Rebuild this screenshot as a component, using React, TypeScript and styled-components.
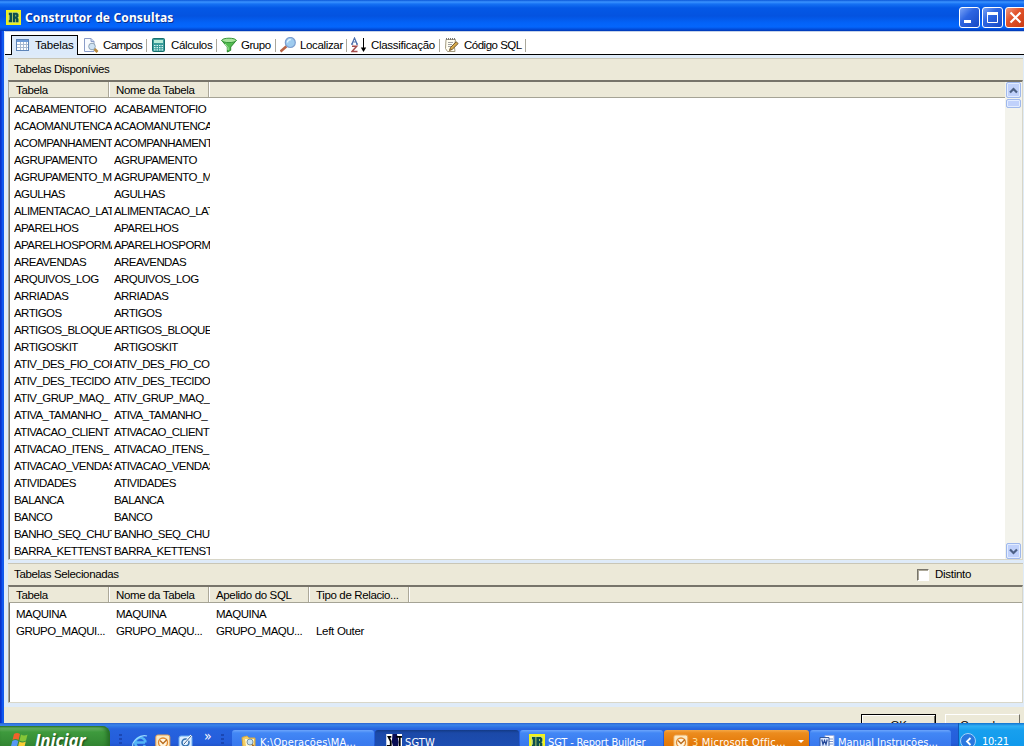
import { ReactNode } from 'react'
import styled, { createGlobalStyle, css } from 'styled-components'

const GlobalStyle = createGlobalStyle`
    * {
        box-sizing: border-box;
    }

    body {
        margin: 0;
        overflow: hidden;
        font: 11.5px/17px 'Liberation Sans', Arial, sans-serif;
        letter-spacing: -0.36px;
        color: #000;
    }

    svg {
        display: block;
        flex-shrink: 0;
    }
`

const Screen = styled.div`
    width: 1024px;
    height: 746px;
    display: flex;
    flex-direction: column;
    overflow: hidden;
    background: #ece9d8;
`

const TitleBar = styled.header`
    height: 31px;
    flex-shrink: 0;
    display: flex;
    align-items: center;
    padding: 4px 0 1px 6px;
    background: linear-gradient(
        #0a56d8 0,
        #3b93ff 2px,
        #1671f3 4px,
        #0458e6 8px,
        #0453e0 16px,
        #0363f8 23px,
        #0466fc 27px,
        #0144cd 30px,
        #0138b0 31px
    );
`

const WindowTitle = styled.h1`
    flex: 1;
    margin: 1px 0 0 4px;
    font: bold 12px/20px 'Noto Sans', 'Open Sans', sans-serif;
    letter-spacing: 0.14px;
    color: #fff;
    text-shadow: 1px 1px #0a2f8c;
`

const WindowButtons = styled.div`
    display: flex;
    gap: 2px;
    margin-right: -2px;
`

const WindowButton = styled.button<{ $close?: boolean }>`
    width: 21px;
    height: 21px;
    padding: 0;
    border: 1px solid #fff;
    border-radius: 3px;
    background: ${({ $close }) =>
        $close
            ? 'linear-gradient(135deg, #ee9a82, #e2542c 40%, #c83a12)'
            : 'linear-gradient(135deg, #7ba4f6, #2e66e2 40%, #1648c4)'};
`

const WindowBody = styled.main`
    height: 692px;
    flex-shrink: 0;
    display: flex;
    flex-direction: column;
    padding-left: 4px;
    background: linear-gradient(90deg, #0831c8 0 1px, #0a3fdc 1px 2px, #1058ee 2px 4px, #dfebf8 4px);
`

const TabBar = styled.nav`
    height: 24px;
    flex-shrink: 0;
    display: flex;
    align-items: flex-end;
    padding-left: 7px;
    margin-left: 1px;
    border-top: 1px solid #c6d3e8;
    border-bottom: 1px solid #000;
    background: #fff;
`

const Tab = styled.div<{ $width: number; $active?: boolean; $spacing?: number }>`
    width: ${({ $width }) => $width}px;
    height: 18px;
    flex-shrink: 0;
    display: flex;
    align-items: center;
    gap: 4px;
    padding-left: 4px;
    white-space: nowrap;
    letter-spacing: ${({ $spacing = -0.35 }) => $spacing}px;

    &::after {
        content: '';
        width: 1px;
        height: 13px;
        flex-shrink: 0;
        margin-left: auto;
        background: #aaa89c;
    }

    ${({ $active }) =>
        $active &&
        css`
            height: 20px;
            margin: 0 1px -1px -1px;
            padding: 0 0 1px 3px;
            border: 1px solid #000;
            border-bottom: 0;
            background: #dceafa;

            &::after {
                display: none;
            }
        `}
`

const TabLabel = styled.span`
    width: 0;
    flex: 1;
    padding-top: 1px;
`

const Panel = styled.section<{ $height: number }>`
    height: ${({ $height }) => $height}px;
    flex-shrink: 0;
    margin: 3px 1px 0 4px;
    display: flex;
    flex-direction: column;
    background: #fff;
`

const PanelHeader = styled.div`
    height: 22px;
    flex-shrink: 0;
    display: flex;
    align-items: center;
    justify-content: space-between;
    padding: 0 52px 0 6px;
    border-top: 1px solid #c9c6b6;
    background: #ece9d8;
`

const ListFrame = styled.div`
    flex: 1;
    min-height: 0;
    display: flex;
    border: solid #d8d6c8;
    border-width: 2px 1px 1px 1px;
    border-top-color: #77746a;
    border-left-color: #aca899;
    box-shadow: inset 1px 0 #716f64;
`

const ListView = styled.div`
    flex: 1;
    min-width: 0;
    overflow: hidden;
`

const HeaderRow = styled.div`
    height: 16px;
    display: flex;
    padding-left: 1px;
    border-bottom: 1px solid #a5a395;
    background: #ece9d8;
`

const HeaderCell = styled.div<{ $first?: boolean }>`
    width: ${({ $first }) => ($first ? 99 : 100)}px;
    padding-left: ${({ $first }) => ($first ? 6 : 7)}px;
    border-right: 1px solid #aca899;
    box-shadow: 1px 0 #fff;
    line-height: 17px;
    white-space: nowrap;
`

const Rows = styled.div<{ $indent: number; $top: number }>`
    padding: ${({ $top }) => $top}px 0 0 ${({ $indent }) => $indent}px;
`

const Row = styled.div`
    height: 17px;
    display: flex;
`

const Cell = styled.span<{ $width: number; $gap: number; $spacing?: number }>`
    width: ${({ $width }) => $width}px;
    margin-right: ${({ $gap }) => $gap}px;
    flex-shrink: 0;
    overflow: hidden;
    white-space: nowrap;
    letter-spacing: ${({ $spacing = -0.57 }) => $spacing}px;
`

const ScrollBar = styled.div`
    width: 17px;
    display: flex;
    flex-direction: column;
    align-items: center;
    gap: 1px;
    background: #f3f3ec;
`

const ScrollPart = styled.div<{ $height: number; $bottom?: boolean }>`
    width: 15px;
    height: ${({ $height }) => $height}px;
    margin-top: ${({ $bottom }) => ($bottom ? 'auto' : 0)};
    display: flex;
    align-items: center;
    justify-content: center;
    border: 1px solid #9fb8ec;
    border-radius: 2px;
    box-shadow: inset 0 0 0 1px #e2ecff;
    background: #c0d1fb;
`

const CheckLabel = styled.label`
    display: flex;
    align-items: center;
    gap: 6px;
    letter-spacing: -0.3px;
`

const CheckBox = styled.span`
    width: 12px;
    height: 12px;
    border: 1px solid;
    border-color: #77746a #fff #fff #77746a;
    box-shadow: inset 1px 1px #aca899;
    background: #fff;
`

const Footer = styled.footer`
    flex: 1;
    min-height: 0;
    margin-top: 4px;
    padding: 7px 4px 0 0;
    display: flex;
    justify-content: flex-end;
    gap: 9px;
    overflow: hidden;
    background: #ece9d8;
`

const DialogButton = styled.button<{ $primary?: boolean }>`
    width: 75px;
    height: 23px;
    padding: 0;
    border: 1px solid;
    border-color: ${({ $primary }) => ($primary ? '#000' : '#fff #716f64 #716f64 #fff')};
    box-shadow: ${({ $primary }) => ($primary ? 'inset 1px 1px #fff, inset -1px 0 #716f64' : 'none')};
    background: #ece9d8;
    font: inherit;
    letter-spacing: -0.2px;
`

const TaskBar = styled.div`
    height: 30px;
    flex-shrink: 0;
    display: flex;
    align-items: stretch;
    font: 11px/16px 'DejaVu Sans Condensed', 'DejaVu Sans', sans-serif;
    font-stretch: condensed;
    color: #fff;
    background: linear-gradient(#2a62cf 0, #3a84ea 2px, #327ae6 3px, #2663de 6px, #245ddb 20px, #1941a5);
`

const StartButton = styled.div`
    width: 110px;
    margin-top: 3px;
    padding: 3px 0 0 11px;
    display: flex;
    gap: 5px;
    border-radius: 0 8px 8px 0;
    font: italic bold 17px/24px 'Open Sans', 'Noto Sans', sans-serif;
    letter-spacing: -0.1px;
    text-shadow: 1px 1px 2px #174417;
    background: linear-gradient(#2f7c2e 0, #69b265 2px, #3e9a3d 6px, #378f37 14px, #2b782b);
    box-shadow: inset -3px 0 4px #246b24;

    svg {
        margin-top: 2px;
    }
`

const QuickLaunch = styled.div`
    width: 122px;
    padding: 11px 8px 0 9px;
    display: flex;
    align-items: flex-start;
    gap: 7px;
`

const Grip = styled.span`
    width: 3px;
    height: 16px;
    flex-shrink: 0;
    background: repeating-linear-gradient(#1a47b4 0 2px, transparent 2px 4px);

    &:first-child {
        margin-right: 3px;
    }
`

const More = styled.span`
    flex: 1;
    padding-left: 3px;
    font-size: 14px;
    line-height: 5px;
`

const taskColors = {
    normal: 'linear-gradient(#6ca5fb 0, #4287f5 3px, #3b7cf0 12px, #3874e8)',
    active: 'linear-gradient(#133a85 0, #1b49a8 3px, #1e50b8)',
    alert: 'linear-gradient(#f5a846 0, #ec8c1e 3px, #e57c0c 12px, #dc7000)',
}

const Task = styled.div<{ $width: number; $tone: keyof typeof taskColors; $spacing?: number }>`
    width: ${({ $width }) => $width}px;
    margin: 7px 1px 0 0;
    padding: 4px 0 0 9px;
    display: flex;
    gap: 3px;
    border-radius: 3px 3px 0 0;
    white-space: nowrap;
    letter-spacing: ${({ $spacing = 0.1 }) => $spacing}px;
    background: ${({ $tone }) => taskColors[$tone]};
`

const DropMark = styled.span`
    margin: 6px 5px 0 auto;
    width: 0;
    height: 0;
    border: 3px solid transparent;
    border-top-color: #fff;
`

const Tray = styled.div`
    flex: 1;
    margin-left: 6px;
    padding: 10px 0 0 1px;
    display: flex;
    gap: 6px;
    border-left: 1px solid #1058b8;
    background: linear-gradient(#1172cf 0, #30b0f5 3px, #18a0ee 7px, #119aec 20px);
`

const TrayArrow = styled.span`
    width: 16px;
    height: 16px;
    display: flex;
    align-items: center;
    justify-content: center;
    border-radius: 50%;
    border: 1px solid #a5d3fa;
    background: #2a78e0;
`

const TaskText = styled.span`
    padding-top: 1px;
`

const Count = styled.span`
    color: #ffdf9c;
`

function Icon({ children, size = 16 }: { children: ReactNode; size?: number }) {
    return (
        <svg width={size} height={size} viewBox="0 0 16 16" fill="none">
            {children}
        </svg>
    )
}

const TableIcon = () => (
    <Icon>
        <rect x="1.5" y="2.5" width="12" height="11" fill="#fff" stroke="#5d84b8" />
        <path d="M2 4h11" stroke="#6e9bd8" strokeWidth="2" />
        <path d="M2 7.5h11M2 10.5h11M5.5 5v8M8.5 5v8M11.5 5v8" stroke="#a8bad2" />
    </Icon>
)

const FieldsIcon = () => (
    <Icon>
        <path d="M1.5 1.5H8l3 3v10H1.5z" fill="#f8fbff" stroke="#8a9cc8" />
        <path d="M8 1.5v3h3" fill="#c8d8f0" stroke="#8a9cc8" />
        <circle cx="9" cy="9.5" r="3.3" fill="#cfe3f4" stroke="#8fa3b4" />
        <path d="m11.5 12 3 3" stroke="#b98a3c" strokeWidth="2.6" />
    </Icon>
)

const CalcIcon = () => (
    <Icon>
        <rect x="1.5" y="1.5" width="12" height="13" rx="1" fill="#3a9c9a" stroke="#16706e" />
        <path d="M3 4.5h9" stroke="#b8ecd8" strokeWidth="3" />
        <path d="M3 8.5h9M3 10.7h9M3 12.9h9" stroke="#d8f4ee" strokeWidth="1.2" strokeDasharray="1.5 1" />
    </Icon>
)

const FunnelIcon = () => (
    <Icon>
        <path d="M.7 3.5 6.3 10v5l3.4-1.7V10l5.6-6.5z" fill="#53bd50" stroke="#28862a" />
        <ellipse cx="8" cy="3.4" rx="7.2" ry="2.2" fill="#a8e49c" stroke="#36963a" />
        <path d="m4 7 3 3.5V13" stroke="#b4edac" />
    </Icon>
)

const SearchIcon = () => (
    <Icon>
        <path d="m.5 14.5 6-5.2" stroke="#b96445" strokeWidth="2.6" />
        <circle cx="10.3" cy="5.5" r="5" fill="#9ecbef" stroke="#7c9fd0" strokeWidth="1.2" />
        <path d="M7.5 5.5c0-2 1.5-3 3.2-2.7" stroke="#e3f5ff" strokeWidth="1.4" />
    </Icon>
)

const SortIcon = () => (
    <Icon>
        <path d="M.8 7.2 3.5 1l2.7 6.2M1.5 5h4M0 7.2h2.200M5 7.2h2" stroke="#4c6fac" strokeWidth="1.2" />
        <path d="M1 9.3h4.7L1 14.5h5.5" stroke="#a54d4d" strokeWidth="1.5" />
        <path d="M12.5 1v12" stroke="#000" />
        <path d="M9.8 10.5h5.4L12.5 15z" fill="#000" />
    </Icon>
)

const SqlIcon = () => (
    <Icon>
        <path d="M2 2.5h9.5l-1 8 .5 4H3.5l-2-3z" fill="#fffdf0" stroke="#a39a80" />
        <path d="M2 2h10" stroke="#777" strokeWidth="2" strokeDasharray="1 1" />
        <path d="M4 5.5h5M4 7.5h4M4 9.5h3" stroke="#a1a1a1" />
        <path d="m5.5 13.5 1-3 5.7-5.8 1.9 1.9-5.8 5.7z" fill="#d9ab4a" stroke="#6f5327" />
    </Icon>
)

const BuilderIcon = ({ size = 15 }: { size?: number }) => (
    <Icon size={size}>
        <path d="M0 0h16v16H0z" fill="#f0f21c" />
        <path d="M2 2h12v12H2z" fill="#d5e468" />
        <path d="M3 3h3.5v10H3v-2l.8-.7V5.7L3 5z" fill="#0d4f4d" />
        <path d="M7.3 3h4.5l1.5 1.5v2.7l-1 1 1 1V13h-2.600V9.200h-.7V13H7.300zm2.700 2v2h.8V5z" fill="#0d4f4d" />
    </Icon>
)

const WindowsLogo = () => (
    <svg width="19" height="19" viewBox="0 0 19 19">
        <path d="M3 3q3-2 6 0L7.5 9q-3-2-6 0z" fill="#f0622a" />
        <path d="M10 3.5q3 2 6.5 0L15 9.5q-3 2-6.5 0z" fill="#85c638" />
        <path d="M1.3 10q3-2 6 0l-1.5 6q-3-2-6 0z" fill="#5798f4" />
        <path d="M8.3 10.5q3 2 6.5 0l-1.5 6q-3 2-6.5 0z" fill="#f9cd35" />
    </svg>
)

const ExplorerIcon = () => (
    <Icon>
        <path d="M13 8.5H4M13 11.2A5.2 5.2 0 1 1 13.3 7v1.5" stroke="#54b5f6" strokeWidth="2.5" />
        <path d="M1 13C-1 8 8 0 15 2" stroke="#9bdcff" strokeWidth="1.2" />
    </Icon>
)

const OutlookIcon = () => (
    <Icon>
        <rect x=".8" y="1" width="14" height="14" rx="2" fill="#fbe9c2" stroke="#eba14e" />
        <circle cx="8" cy="8.5" r="4.5" fill="#fff5df" stroke="#e4892d" strokeWidth="1.3" />
        <path d="m5 6.5 3 3 4-4" stroke="#b76a1e" strokeWidth="1.3" />
    </Icon>
)

const DesktopIcon = () => (
    <Icon>
        <rect x="1" y="2" width="13" height="13" rx="2" fill="#d9ecff" stroke="#6eaff0" />
        <circle cx="7.5" cy="8.5" r="3.5" stroke="#316fae" strokeWidth="1.5" />
        <path d="m6 10 7.5-8.5" stroke="#fff" strokeWidth="2.5" />
        <path d="m6 10 7.5-8.5" stroke="#315c8e" />
    </Icon>
)

const FolderIcon = () => (
    <Icon>
        <path d="M1 3.5 6 2l2 2h6v9.5H2z" fill="#f3ce66" stroke="#d8a941" />
        <path d="M4 5h9l-1 7H5z" fill="#fff9d6" />
        <circle cx="9" cy="8" r="3" fill="#c8e3f5" stroke="#7b94a2" />
        <path d="m11 10.5 3 3.5" stroke="#9f6424" strokeWidth="1.5" />
    </Icon>
)

const SgtwIcon = () => (
    <Icon size={18}>
        <path d="M2 0h14v15H2z" fill="#fff" />
        <path d="M7.500 0h4l1.500 7-1 8H9L7 7z" fill="#080c54" />
        <path d="M6.500 2.500H4l2 4v4H2.500M11 2.500h5M14 3v11" stroke="#000" strokeWidth="1.6" />
    </Icon>
)

const WordIcon = () => (
    <Icon>
        <path d="M6 1.5h9v13H6z" fill="#fff" stroke="#9aaee0" />
        <path d="M10 5h4M10 7.5h4M10 10h4" stroke="#7b94cc" />
        <path d="M1 3.5h9v9H1z" fill="#dbe8ff" stroke="#35599e" />
        <path d="m2.8 5.5 1.2 5 1.5-4 1.5 4 1.2-5" stroke="#264a9a" strokeWidth="1.2" />
    </Icon>
)

const Chevron = ({ down }: { down?: boolean }) => (
    <svg width="9" height="7" viewBox="0 0 9 7" fill="none">
        <path d={down ? 'M1 1.5 4.5 5 8 1.5' : 'M1 5.5 4.5 2 8 5.5'} stroke="#4d6185" strokeWidth="2.2" />
    </svg>
)

const tabs = [
    { label: 'Tabelas', width: 67, icon: <TableIcon />, spacing: -0.15 },
    { label: 'Campos', width: 68, icon: <FieldsIcon />, spacing: -0.6 },
    { label: 'Cálculos', width: 70, icon: <CalcIcon />, spacing: -0.35 },
    { label: 'Grupo', width: 59, icon: <FunnelIcon />, spacing: -0.45 },
    { label: 'Localizar', width: 71, icon: <SearchIcon />, spacing: -0.35 },
    { label: 'Classificação', width: 93, icon: <SortIcon />, spacing: -0.3 },
    { label: 'Código SQL', width: 86, icon: <SqlIcon />, spacing: -0.5 },
]

const availableTables = [
    'ACABAMENTOFIO',
    'ACAOMANUTENCA',
    'ACOMPANHAMENT',
    'AGRUPAMENTO',
    'AGRUPAMENTO_M',
    'AGULHAS',
    'ALIMENTACAO_LAT',
    'APARELHOS',
    'APARELHOSPORMA',
    'AREAVENDAS',
    'ARQUIVOS_LOG',
    'ARRIADAS',
    'ARTIGOS',
    'ARTIGOS_BLOQUE',
    'ARTIGOSKIT',
    'ATIV_DES_FIO_COR',
    'ATIV_DES_TECIDO',
    'ATIV_GRUP_MAQ_',
    'ATIVA_TAMANHO_',
    'ATIVACAO_CLIENT',
    'ATIVACAO_ITENS_',
    'ATIVACAO_VENDAS',
    'ATIVIDADES',
    'BALANCA',
    'BANCO',
    'BANHO_SEQ_CHUT',
    'BARRA_KETTENST',
]

const selectedColumns = ['Tabela', 'Nome da Tabela', 'Apelido do SQL', 'Tipo de Relacio...']

const selectedTables = [
    ['MAQUINA', 'MAQUINA', 'MAQUINA', ''],
    ['GRUPO_MAQUI...', 'GRUPO_MAQU...', 'GRUPO_MAQU...', 'Left Outer'],
]

function ListHeader({ columns }: { columns: string[] }) {
    return (
        <HeaderRow>
            {columns.map((column, index) => (
                <HeaderCell key={column} $first={index === 0}>
                    {column}
                </HeaderCell>
            ))}
        </HeaderRow>
    )
}

export default function App() {
    return (
        <Screen>
            <GlobalStyle />
            <TitleBar>
                <BuilderIcon />
                <WindowTitle>Construtor de Consultas</WindowTitle>
                <WindowButtons>
                    <WindowButton aria-label="Minimizar">
                        <svg width="19" height="19">
                            <path d="M4 12h7v3H4z" fill="#fff" />
                        </svg>
                    </WindowButton>
                    <WindowButton aria-label="Maximizar">
                        <svg width="19" height="19" fill="none">
                            <path d="M4.5 5v9.5h10V5" stroke="#fff" />
                            <path d="M4 5.5h11" stroke="#fff" strokeWidth="3" />
                        </svg>
                    </WindowButton>
                    <WindowButton $close aria-label="Fechar">
                        <svg width="19" height="19">
                            <path d="m4.5 4.5 10 10m0-10-10 10" stroke="#fff" strokeWidth="2.2" />
                        </svg>
                    </WindowButton>
                </WindowButtons>
            </TitleBar>

            <WindowBody>
                <TabBar>
                    {tabs.map(({ label, width, icon, spacing }, index) => (
                        <Tab key={label} $width={width} $active={index === 0} $spacing={spacing}>
                            {icon}
                            <TabLabel>{label}</TabLabel>
                        </Tab>
                    ))}
                </TabBar>

                <Panel $height={502}>
                    <PanelHeader>Tabelas Disponívies</PanelHeader>
                    <ListFrame>
                        <ListView>
                            <ListHeader columns={['Tabela', 'Nome da Tabela']} />
                            <Rows $indent={5} $top={3}>
                                {availableTables.map((table) => (
                                    <Row key={table}>
                                        <Cell $width={98} $gap={2}>
                                            {table}
                                        </Cell>
                                        <Cell $width={96} $gap={0}>
                                            {table}
                                        </Cell>
                                    </Row>
                                ))}
                            </Rows>
                        </ListView>
                        <ScrollBar>
                            <ScrollPart $height={16}>
                                <Chevron />
                            </ScrollPart>
                            <ScrollPart $height={9} />
                            <ScrollPart $height={16} $bottom>
                                <Chevron down />
                            </ScrollPart>
                        </ScrollBar>
                    </ListFrame>
                </Panel>

                <Panel $height={140}>
                    <PanelHeader>
                        Tabelas Selecionadas
                        <CheckLabel>
                            <CheckBox />
                            Distinto
                        </CheckLabel>
                    </PanelHeader>
                    <ListFrame>
                        <ListView>
                            <ListHeader columns={selectedColumns} />
                            <Rows $indent={7} $top={3}>
                                {selectedTables.map((row) => (
                                    <Row key={row[0]}>
                                        {row.map((value, index) => (
                                            <Cell
                                                key={index}
                                                $width={92}
                                                $gap={8}
                                                $spacing={index === 3 ? -0.3 : -0.5}
                                            >
                                                {value}
                                            </Cell>
                                        ))}
                                    </Row>
                                ))}
                            </Rows>
                        </ListView>
                    </ListFrame>
                </Panel>

                <Footer>
                    <DialogButton $primary>OK</DialogButton>
                    <DialogButton>Cancelar</DialogButton>
                </Footer>
            </WindowBody>

            <TaskBar>
                <StartButton>
                    <WindowsLogo />
                    Iniciar
                </StartButton>
                <QuickLaunch>
                    <Grip />
                    <ExplorerIcon />
                    <OutlookIcon />
                    <DesktopIcon />
                    <More>»</More>
                    <Grip />
                </QuickLaunch>
                <Task $width={142} $tone="normal">
                    <FolderIcon />
                    <TaskText>K:\Operações\MA...</TaskText>
                </Task>
                <Task $width={144} $tone="active">
                    <SgtwIcon />
                    <TaskText>SGTW</TaskText>
                </Task>
                <Task $width={143} $tone="normal" $spacing={-0.15}>
                    <BuilderIcon size={16} />
                    <TaskText>SGT - Report Builder</TaskText>
                </Task>
                <Task $width={145} $tone="alert" $spacing={0.2}>
                    <OutlookIcon />
                    <TaskText>
                        <Count>3</Count> Microsoft Offic...
                    </TaskText>
                    <DropMark />
                </Task>
                <Task $width={141} $tone="normal" $spacing={0}>
                    <WordIcon />
                    <TaskText>Manual Instruções...</TaskText>
                </Task>
                <Tray>
                    <TrayArrow>
                        <svg width="7" height="9" fill="none">
                            <path d="M5.5 1 2 4.5 5.5 8" stroke="#fff" strokeWidth="1.8" />
                        </svg>
                    </TrayArrow>
                    <TaskText>10:21</TaskText>
                </Tray>
            </TaskBar>
        </Screen>
    )
}
